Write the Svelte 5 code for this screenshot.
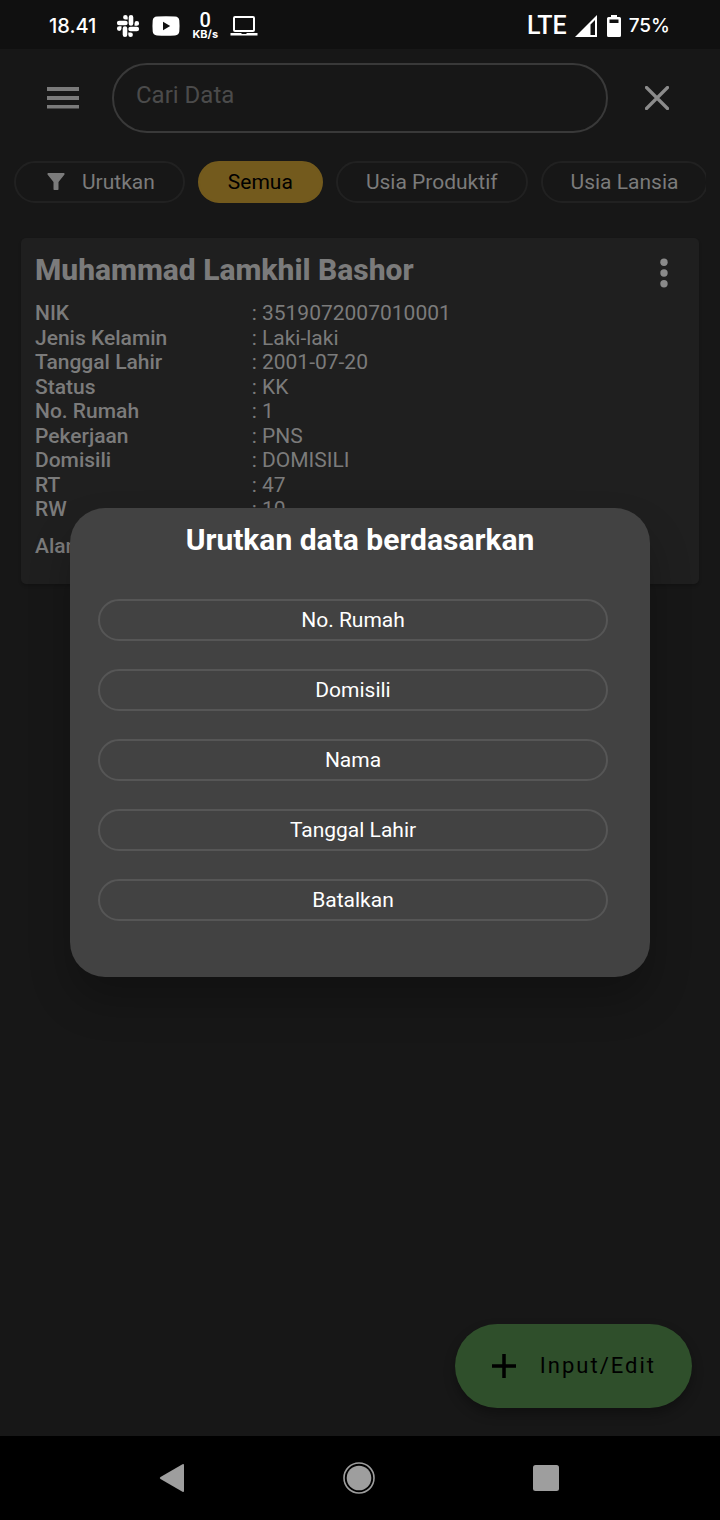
<script>
  const filters = ['Usia Produktif', 'Usia Lansia'];
  const details = [
    ['NIK', '3519072007010001'],
    ['Jenis Kelamin', 'Laki-laki'],
    ['Tanggal Lahir', '2001-07-20'],
    ['Status', 'KK'],
    ['No. Rumah', '1'],
    ['Pekerjaan', 'PNS'],
    ['Domisili', 'DOMISILI'],
    ['RT', '47'],
    ['RW', '10']
  ];
  const sortOptions = ['No. Rumah', 'Domisili', 'Nama', 'Tanggal Lahir', 'Batalkan'];
</script>

<div class="screen">
  <div class="status">
    <div class="group left">
      <span class="time">18.41</span>
      <svg width="24" height="24" viewBox="0 0 24 24" fill="#fff" aria-hidden="true">
        <path d="M5.5 14.6a2.3 2.3 0 1 1-2.3-2.3h2.3zM6.7 14.6a2.3 2.3 0 0 1 4.6 0v6.2a2.3 2.3 0 0 1-4.6 0z" />
        <path d="M9.4 5.5a2.3 2.3 0 1 1 2.3-2.3v2.3zM9.4 6.7a2.3 2.3 0 0 1 0 4.6H3.2a2.3 2.3 0 0 1 0-4.6z" />
        <path d="M18.5 9.4a2.3 2.3 0 1 1 2.3 2.3h-2.3zM17.3 9.4a2.3 2.3 0 0 1-4.6 0V3.2a2.3 2.3 0 0 1 4.6 0z" />
        <path d="M14.6 18.5a2.3 2.3 0 1 1-2.3 2.3v-2.3zM14.6 17.3a2.3 2.3 0 0 1 0-4.6h6.2a2.3 2.3 0 0 1 0 4.6z" />
      </svg>
      <svg width="28" height="20" viewBox="0 0 28 20" aria-hidden="true">
        <path fill="#fff" d="M5 .6Q14 0 23 .6Q27 .9 27.3 4.500Q27.800 10 27.300 15.500Q27 19.100 23 19.400Q14 20 5 19.400Q1 19.100 .7 15.500Q.2 10 .7 4.500Q1 .9 5 .6z" />
        <path fill="#101010" d="M11 5.800v8.400l7.200-4.200z" />
      </svg>
      <span class="speed"><b>0</b><small>KB/s</small></span>
      <svg width="28" height="20" viewBox="0 0 28 20" aria-hidden="true">
        <rect x="4" y="1" width="20" height="14" rx="1" fill="none" stroke="#fff" stroke-width="2" />
        <path fill="#fff" d="M.5 17h10.500l1 1h4l1-1h10.500v2.500H.5z" />
      </svg>
    </div>
    <div class="group right">
      <span class="lte">LTE</span>
      <svg width="24" height="24" viewBox="0 0 24 24" aria-hidden="true">
        <path fill="#fff" fill-rule="evenodd" d="M0 23L22 1v22zM15.500 10.500v10.500h4.500V6z" />
      </svg>
      <svg width="14" height="24" viewBox="0 0 14 24" aria-hidden="true">
        <path fill="#fff" fill-rule="evenodd" d="M4 1h6v2h2.500q1.500 0 1.500 1.500v17q0 1.500-1.500 1.500h-11Q0 23 0 21.500v-17Q0 3 1.500 3H4zM2.500 5.500V9h9V5.500z" />
      </svg>
      <span class="battery">75%</span>
    </div>
  </div>

  <main>
    <header>
      <button class="icon menu" aria-label="Menu">
        <svg width="32" height="22" viewBox="0 0 32 22" fill="#7b7b7b" aria-hidden="true">
          <path d="M0 0h32v4H0zM0 9h32v4H0zM0 18h32v3.500H0z" />
        </svg>
      </button>
      <input class="search" type="text" placeholder="Cari Data" aria-label="Cari Data" />
      <button class="icon close" aria-label="Tutup">
        <svg width="24" height="24" viewBox="0 0 24 24" fill="none" stroke="#8b8b8b" stroke-width="3.200" stroke-linecap="round" aria-hidden="true">
          <path d="M1.500 1.500l21 21M22.500 1.500l-21 21" />
        </svg>
      </button>
    </header>

    <div class="chips">
      <button class="chip sort">
        <svg width="18" height="18" viewBox="0 0 18 18" fill="#7b7b7b" aria-hidden="true">
          <path d="M1 0h16q1 .5.500 1.500L11.500 9v7.200q0 .8-.8.800H7.300q-.8 0-.8-.8V9L.5 1.500Q0 .5 1 0z" />
        </svg>
        Urutkan
      </button>
      <button class="chip active">Semua</button>
      {#each filters as name}
        <button class="chip">{name}</button>
      {/each}
    </div>

    <article class="card">
      <div class="card-head">
        <h2>Muhammad Lamkhil Bashor</h2>
        <button class="icon more" aria-label="Opsi">
          <svg width="8" height="30" viewBox="0 0 8 30" fill="#8a8a8a" aria-hidden="true">
            <circle cx="4" cy="4.300" r="3.700" />
            <circle cx="4" cy="15" r="3.700" />
            <circle cx="4" cy="25.700" r="3.700" />
          </svg>
        </button>
      </div>
      <dl>
        {#each details as [label, value]}
          <dt>{label}</dt>
          <dd>: {value}</dd>
        {/each}
      </dl>
      <p class="address">Alamat</p>
    </article>

    <button class="fab">
      <svg width="24" height="24" viewBox="0 0 24 24" fill="none" stroke="#000" stroke-width="3.500" aria-hidden="true">
        <path d="M12 0v24M0 12h24" />
      </svg>
      <span>Input/Edit</span>
    </button>

    <div class="overlay">
      <div class="dialog" role="dialog" aria-modal="true" aria-labelledby="sort-title">
        <h1 id="sort-title">Urutkan data berdasarkan</h1>
        <div class="options">
          {#each sortOptions as option}
            <button>{option}</button>
          {/each}
        </div>
      </div>
    </div>
  </main>

  <nav>
    <button class="icon" aria-label="Kembali">
      <svg width="26" height="30" viewBox="0 0 26 30" fill="#9e9e9e" aria-hidden="true">
        <path d="M1.500 14L23.500 1.200q1.500-.7 1.500 1v25.600q0 1.700-1.500 1L1.500 16q-1.500-1 0-2z" />
      </svg>
    </button>
    <button class="icon" aria-label="Beranda">
      <svg width="32" height="32" viewBox="0 0 32 32" aria-hidden="true">
        <circle cx="16" cy="16" r="15" fill="none" stroke="#9e9e9e" stroke-width="1.600" />
        <circle cx="16" cy="16" r="12.300" fill="#9e9e9e" />
      </svg>
    </button>
    <button class="icon" aria-label="Aplikasi terbaru">
      <svg width="26" height="26" viewBox="0 0 26 26" aria-hidden="true">
        <rect width="26" height="26" rx="2.500" fill="#9e9e9e" />
      </svg>
    </button>
  </nav>
</div>

<style>
  :global(body) {
    margin: 0;
    background: #171717;
  }

  .screen {
    display: flex;
    flex-direction: column;
    min-height: 100vh;
    background: #171717;
    color: #7b7b7b;
    font-family: Roboto, sans-serif;
    font-size: 21px;
    line-height: 24px;
  }

  button {
    padding: 0;
    border: 0;
    background: none;
    color: inherit;
    font: inherit;
    white-space: nowrap;
  }

  svg {
    display: block;
    flex: none;
  }

  .icon {
    display: grid;
    place-items: center;
  }

  .status {
    display: flex;
    justify-content: space-between;
    box-sizing: border-box;
    height: 49px;
    padding: 2px 50px 0 49px;
    background: #101010;
    color: #fff;
  }

  .group {
    display: flex;
    align-items: center;
  }

  .left {
    gap: 12px;
  }

  .right {
    gap: 8px;
  }

  .time,
  .battery {
    font-family: Inter, sans-serif;
    font-size: 20px;
    font-weight: 500;
  }

  .time {
    margin-right: 8px;
  }

  .battery {
    font-size: 19px;
  }

  .lte {
    font-size: 25px;
    font-weight: 500;
  }

  .speed {
    display: flex;
    flex-direction: column;
    align-items: center;
  }

  .speed b {
    font-size: 20px;
    font-weight: 500;
    line-height: 16px;
  }

  .speed small {
    font-family: Inter, sans-serif;
    font-size: 11px;
    font-weight: 700;
    line-height: 12px;
  }

  main {
    position: relative;
    display: flex;
    flex: 1;
    flex-direction: column;
  }

  header {
    display: flex;
    align-items: center;
    padding: 14px 14px 0;
  }

  .menu,
  .close {
    width: 98px;
    height: 70px;
  }

  .search {
    flex: 1;
    box-sizing: border-box;
    min-width: 0;
    height: 70px;
    padding: 0 22px 6px;
    border: 2px solid #393939;
    border-radius: 35px;
    background: none;
    color: #7b7b7b;
    font-family: inherit;
    font-size: 24px;
  }

  .search::placeholder {
    color: #4b4b4b;
    opacity: 1;
  }

  .chips {
    display: flex;
    gap: 13px;
    margin: 28px 14px 0;
    overflow: hidden;
  }

  .chip {
    display: flex;
    flex: none;
    align-items: center;
    gap: 17px;
    box-sizing: border-box;
    height: 42px;
    padding: 0 28px;
    border: 2px solid #212121;
    border-radius: 21px;
  }

  .sort {
    padding-left: 31px;
  }

  .active {
    border-color: #735a1d;
    background: #735a1d;
    color: #000;
  }

  .card {
    margin: 35px 21px 0;
    padding: 14px 14px 26px;
    border-radius: 5px;
    background: #1f1f1f;
    box-shadow: 0 2px 3px rgb(0 0 0 / 20%);
  }

  .card-head {
    display: flex;
    justify-content: space-between;
    height: 36px;
  }

  h1,
  h2 {
    margin: 0;
    font-size: 30px;
    line-height: 36px;
  }

  h2 {
    font-weight: 800;
  }

  .more {
    width: 42px;
    height: 42px;
  }

  dl {
    display: grid;
    grid-template-columns: 1fr 2fr;
    grid-template-rows: repeat(9, 1fr);
    height: 221px;
    margin: 13px 0 0;
  }

  dt {
    font-weight: 500;
  }

  dd {
    margin: 0;
  }

  .address {
    margin: 12px 0 0;
    font-weight: 500;
  }

  .fab {
    display: flex;
    align-items: center;
    gap: 24px;
    height: 84px;
    margin: auto 28px 28px auto;
    padding: 0 36px 0 37px;
    border-radius: 42px;
    background: #2f4f2b;
    box-shadow: 0 6px 12px rgb(0 0 0 / 30%);
    color: #000;
    font-size: 22px;
    letter-spacing: 2px;
  }

  .overlay {
    position: absolute;
    inset: 0;
    display: grid;
    align-items: center;
    padding: 0 70px;
  }

  .dialog {
    padding: 14px 42px 56px 28px;
    border-radius: 35px;
    background: #424242;
    box-shadow: 0 24px 42px rgb(0 0 0 / 24%);
    color: #fff;
  }

  h1 {
    margin-right: -14px;
    text-align: center;
  }

  .options {
    display: grid;
    gap: 28px;
    margin-top: 41px;
  }

  .options button {
    height: 42px;
    border: 2px solid #565656;
    border-radius: 21px;
  }

  nav {
    display: grid;
    grid-template-columns: repeat(3, 1fr);
    height: 84px;
    padding: 0 80px 0 78px;
    background: #000;
  }
</style>
